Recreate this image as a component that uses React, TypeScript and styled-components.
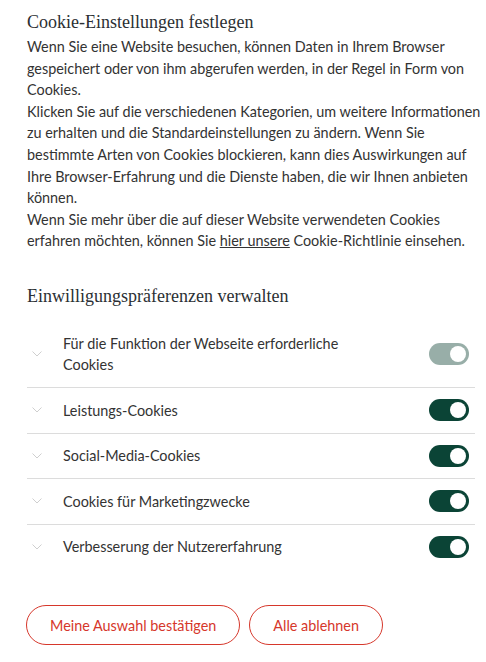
import React, { useState } from "react";
import styled, { createGlobalStyle } from "styled-components";

const GlobalStyle = createGlobalStyle`
  html, body {
    margin: 0;
    padding: 0;
    background: #ffffff;
  }
  * {
    box-sizing: border-box;
  }
`;

const Panel = styled.div`
  width: 486px;
  padding: 9px 4px 0 27px;
  font-family: Lato, "Liberation Sans", sans-serif;
  color: #333333;
`;

const Heading = styled.h2`
  margin: 0;
  font-family: "Liberation Serif", serif;
  font-weight: normal;
  font-size: 18px;
  line-height: 26px;
  color: #2b2f33;
`;

const Intro = styled.p`
  margin: 1px 0 0;
  font-size: 14.4px;
  line-height: 21.6px;
`;

const Link = styled.a`
  color: inherit;
  text-decoration: underline;
`;

const SubHeading = styled(Heading)`
  margin-top: 31px;
`;

const List = styled.div`
  margin-top: 13px;
  margin-right: 7px;
  display: flex;
  flex-direction: column;
`;

const Row = styled.div<{ $last?: boolean }>`
  display: flex;
  align-items: center;
  padding: 11px 6px 11.5px 5px;
  border-bottom: ${(p) => (p.$last ? "none" : "1px solid #dcdcdc")};
`;

const Chevron = styled.span`
  width: 10px;
  display: flex;
  align-items: center;
  margin-right: 21px;
`;

const Label = styled.span`
  flex: 1;
  font-size: 14.4px;
  line-height: 21.5px;
  max-width: 300px;
  margin-right: auto;
`;

const Track = styled.button<{ $on: boolean; $disabled?: boolean }>`
  width: 40px;
  height: 22px;
  border: none;
  border-radius: 11px;
  padding: 3px;
  display: flex;
  justify-content: ${(p) => (p.$on ? "flex-end" : "flex-start")};
  align-items: center;
  background: ${(p) => (p.$disabled ? "#98aea8" : p.$on ? "#0b4436" : "#c4c4c4")};
  cursor: ${(p) => (p.$disabled ? "default" : "pointer")};
`;

const Knob = styled.span`
  width: 16px;
  height: 16px;
  border-radius: 50%;
  background: #ffffff;
`;

const Actions = styled.div`
  display: flex;
  gap: 9px;
  margin-top: 36px;
  margin-left: -1px;
`;

const OutlineButton = styled.button`
  height: 40px;
  padding: 0 23px;
  border: 1px solid #d6372b;
  border-radius: 20px;
  background: #ffffff;
  color: #d6372b;
  font-family: Lato, "Liberation Sans", sans-serif;
  font-size: 14.4px;
  cursor: pointer;
`;

const ChevronIcon = () => (
  <svg width="10" height="6" viewBox="0 0 10 6" fill="none">
    <path d="M0.5 0.5 L5 5 L9.5 0.5" stroke="#cfcfcf" strokeWidth="1" />
  </svg>
);

const categories = [
  { label: "Für die Funktion der Webseite erforderliche Cookies", locked: true },
  { label: "Leistungs-Cookies" },
  { label: "Social-Media-Cookies" },
  { label: "Cookies für Marketingzwecke" },
  { label: "Verbesserung der Nutzererfahrung" },
];

const App: React.FC = () => {
  const [enabled, setEnabled] = useState<boolean[]>(categories.map(() => true));

  const toggle = (i: number) => {
    if (categories[i].locked) return;
    setEnabled((prev) => prev.map((v, idx) => (idx === i ? !v : v)));
  };

  return (
    <Panel>
      <GlobalStyle />
      <Heading>Cookie-Einstellungen festlegen</Heading>
      <Intro>
        Wenn Sie eine Website besuchen, können Daten in Ihrem Browser
        gespeichert oder von ihm abgerufen werden, in der Regel in Form von
        Cookies.
        <br />
        Klicken Sie auf die verschiedenen Kategorien, um weitere Informationen
        zu erhalten und die Standardeinstellungen zu ändern. Wenn Sie
        <br />
        bestimmte Arten von Cookies blockieren, kann dies Auswirkungen auf
        <br />
        Ihre Browser-Erfahrung und die Dienste haben, die wir Ihnen anbieten
        können.
        <br />
        Wenn Sie mehr über die auf dieser Website verwendeten Cookies erfahren
        möchten, können Sie <Link href="#">hier unsere</Link> Cookie-Richtlinie
        einsehen.
      </Intro>
      <SubHeading>Einwilligungspräferenzen verwalten</SubHeading>
      <List>
        {categories.map((c, i) => (
          <Row key={c.label} $last={i === categories.length - 1}>
            <Chevron>
              <ChevronIcon />
            </Chevron>
            <Label>{c.label}</Label>
            <Track
              $on={enabled[i]}
              $disabled={c.locked}
              onClick={() => toggle(i)}
              aria-pressed={enabled[i]}
            >
              <Knob />
            </Track>
          </Row>
        ))}
      </List>
      <Actions>
        <OutlineButton>Meine Auswahl bestätigen</OutlineButton>
        <OutlineButton>Alle ablehnen</OutlineButton>
      </Actions>
    </Panel>
  );
};

export default App;
